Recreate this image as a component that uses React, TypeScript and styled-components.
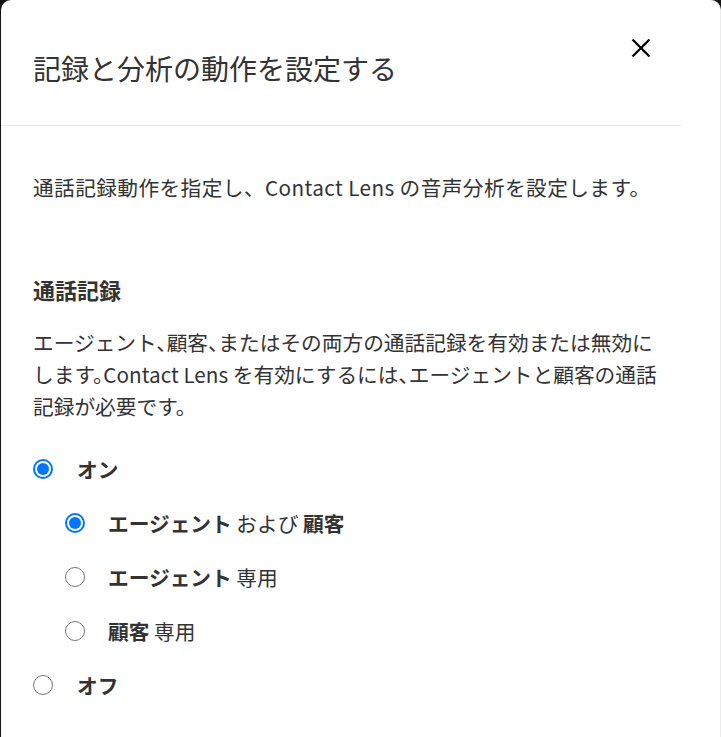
import styled, { createGlobalStyle } from 'styled-components'

const GlobalStyle = createGlobalStyle`
  html, body {
    margin: 0;
    padding: 0;
    background: #141414;
  }
  body {
    font-family: "Noto Sans CJK JP", "Noto Sans", sans-serif;
    color: #333;
  }
`

const Screen = styled.div`
  width: 721px;
  height: 737px;
  overflow: hidden;
  padding-left: 1px;
  box-sizing: border-box;
`

const Modal = styled.div`
  width: 719px;
  height: 737px;
  background: #fff;
  border-top-left-radius: 10px;
  border-top-right-radius: 10px;
  border-right: 1px solid #ececec;
  box-sizing: content-box;
  display: flex;
  flex-direction: column;
`

const Header = styled.div`
  height: 125px;
  margin-right: 39px;
  border-bottom: 1px solid #eaeded;
  display: flex;
  align-items: flex-start;
  justify-content: space-between;
  padding-left: 32px;
  box-sizing: content-box;
`

const Title = styled.h2`
  margin: 50px 0 0;
  font-size: 28px;
  font-weight: 400;
  line-height: 36px;
  color: #333;
`

const CloseButton = styled.button`
  margin: 35px 27px 0 0;
  width: 26px;
  height: 26px;
  padding: 0;
  border: none;
  background: none;
  display: flex;
  align-items: center;
  justify-content: center;
  cursor: pointer;
`

const Body = styled.div`
  padding: 45px 0 0 32px;
  width: 648px;
`

const Lead = styled.p`
  margin: 0;
  font-size: 20.7px;
  line-height: 32px;
  letter-spacing: 0.4px;
`

const SectionTitle = styled.h3`
  margin: 70px 0 0;
  font-size: 22px;
  font-weight: 700;
  line-height: 32px;
`

const Description = styled.p`
  margin: 21px 0 0;
  max-width: 632px;
  font-size: 20.7px;
  line-height: 32px;
  font-feature-settings: "halt";
`

const Options = styled.div`
  margin-top: 20px;
  display: flex;
  flex-direction: column;
`

const OptionRow = styled.label<{ $nested?: boolean }>`
  height: 54px;
  display: flex;
  align-items: center;
  padding-left: ${({ $nested }) => ($nested ? '32px' : '0')};
  gap: ${({ $nested }) => ($nested ? '23px' : '24px')};
  font-size: 20.7px;
  cursor: pointer;
`

const RadioCircle = styled.span<{ $checked?: boolean }>`
  width: 20px;
  height: 20px;
  border-radius: 50%;
  box-sizing: border-box;
  border: ${({ $checked }) => ($checked ? '2px solid #0075ff' : '1px solid #767676')};
  display: flex;
  align-items: center;
  justify-content: center;
  flex-shrink: 0;

  &::after {
    content: '';
    display: ${({ $checked }) => ($checked ? 'block' : 'none')};
    width: 12px;
    height: 12px;
    border-radius: 50%;
    background: #0075ff;
  }
`

const Strong = styled.span`
  font-weight: 700;
`

const Plain = styled.span`
  font-weight: 400;
`

const CloseIcon = () => (
  <svg width="20" height="20" viewBox="0 0 20 20">
    <path d="M1.5 1.5 L18.5 18.5 M18.5 1.5 L1.5 18.5" stroke="#000" strokeWidth="2.3" />
  </svg>
)

function App() {
  return (
    <Screen>
      <GlobalStyle />
      <Modal>
        <Header>
          <Title>記録と分析の動作を設定する</Title>
          <CloseButton aria-label="閉じる">
            <CloseIcon />
          </CloseButton>
        </Header>
        <Body>
          <Lead>通話記録動作を指定し、Contact Lens の音声分析を設定します。</Lead>
          <SectionTitle>通話記録</SectionTitle>
          <Description>
            エージェント、顧客、またはその両方の通話記録を有効または無効にします。Contact Lens を有効にするには、エージェントと顧客の通話記録が必要です。
          </Description>
          <Options>
            <OptionRow>
              <RadioCircle $checked />
              <Strong>オン</Strong>
            </OptionRow>
            <OptionRow $nested>
              <RadioCircle $checked />
              <span>
                <Strong>エージェント</Strong> <Plain>および</Plain> <Strong>顧客</Strong>
              </span>
            </OptionRow>
            <OptionRow $nested>
              <RadioCircle />
              <span>
                <Strong>エージェント</Strong> <Plain>専用</Plain>
              </span>
            </OptionRow>
            <OptionRow $nested>
              <RadioCircle />
              <span>
                <Strong>顧客</Strong> <Plain>専用</Plain>
              </span>
            </OptionRow>
            <OptionRow>
              <RadioCircle />
              <Strong>オフ</Strong>
            </OptionRow>
          </Options>
        </Body>
      </Modal>
    </Screen>
  )
}

export default App
